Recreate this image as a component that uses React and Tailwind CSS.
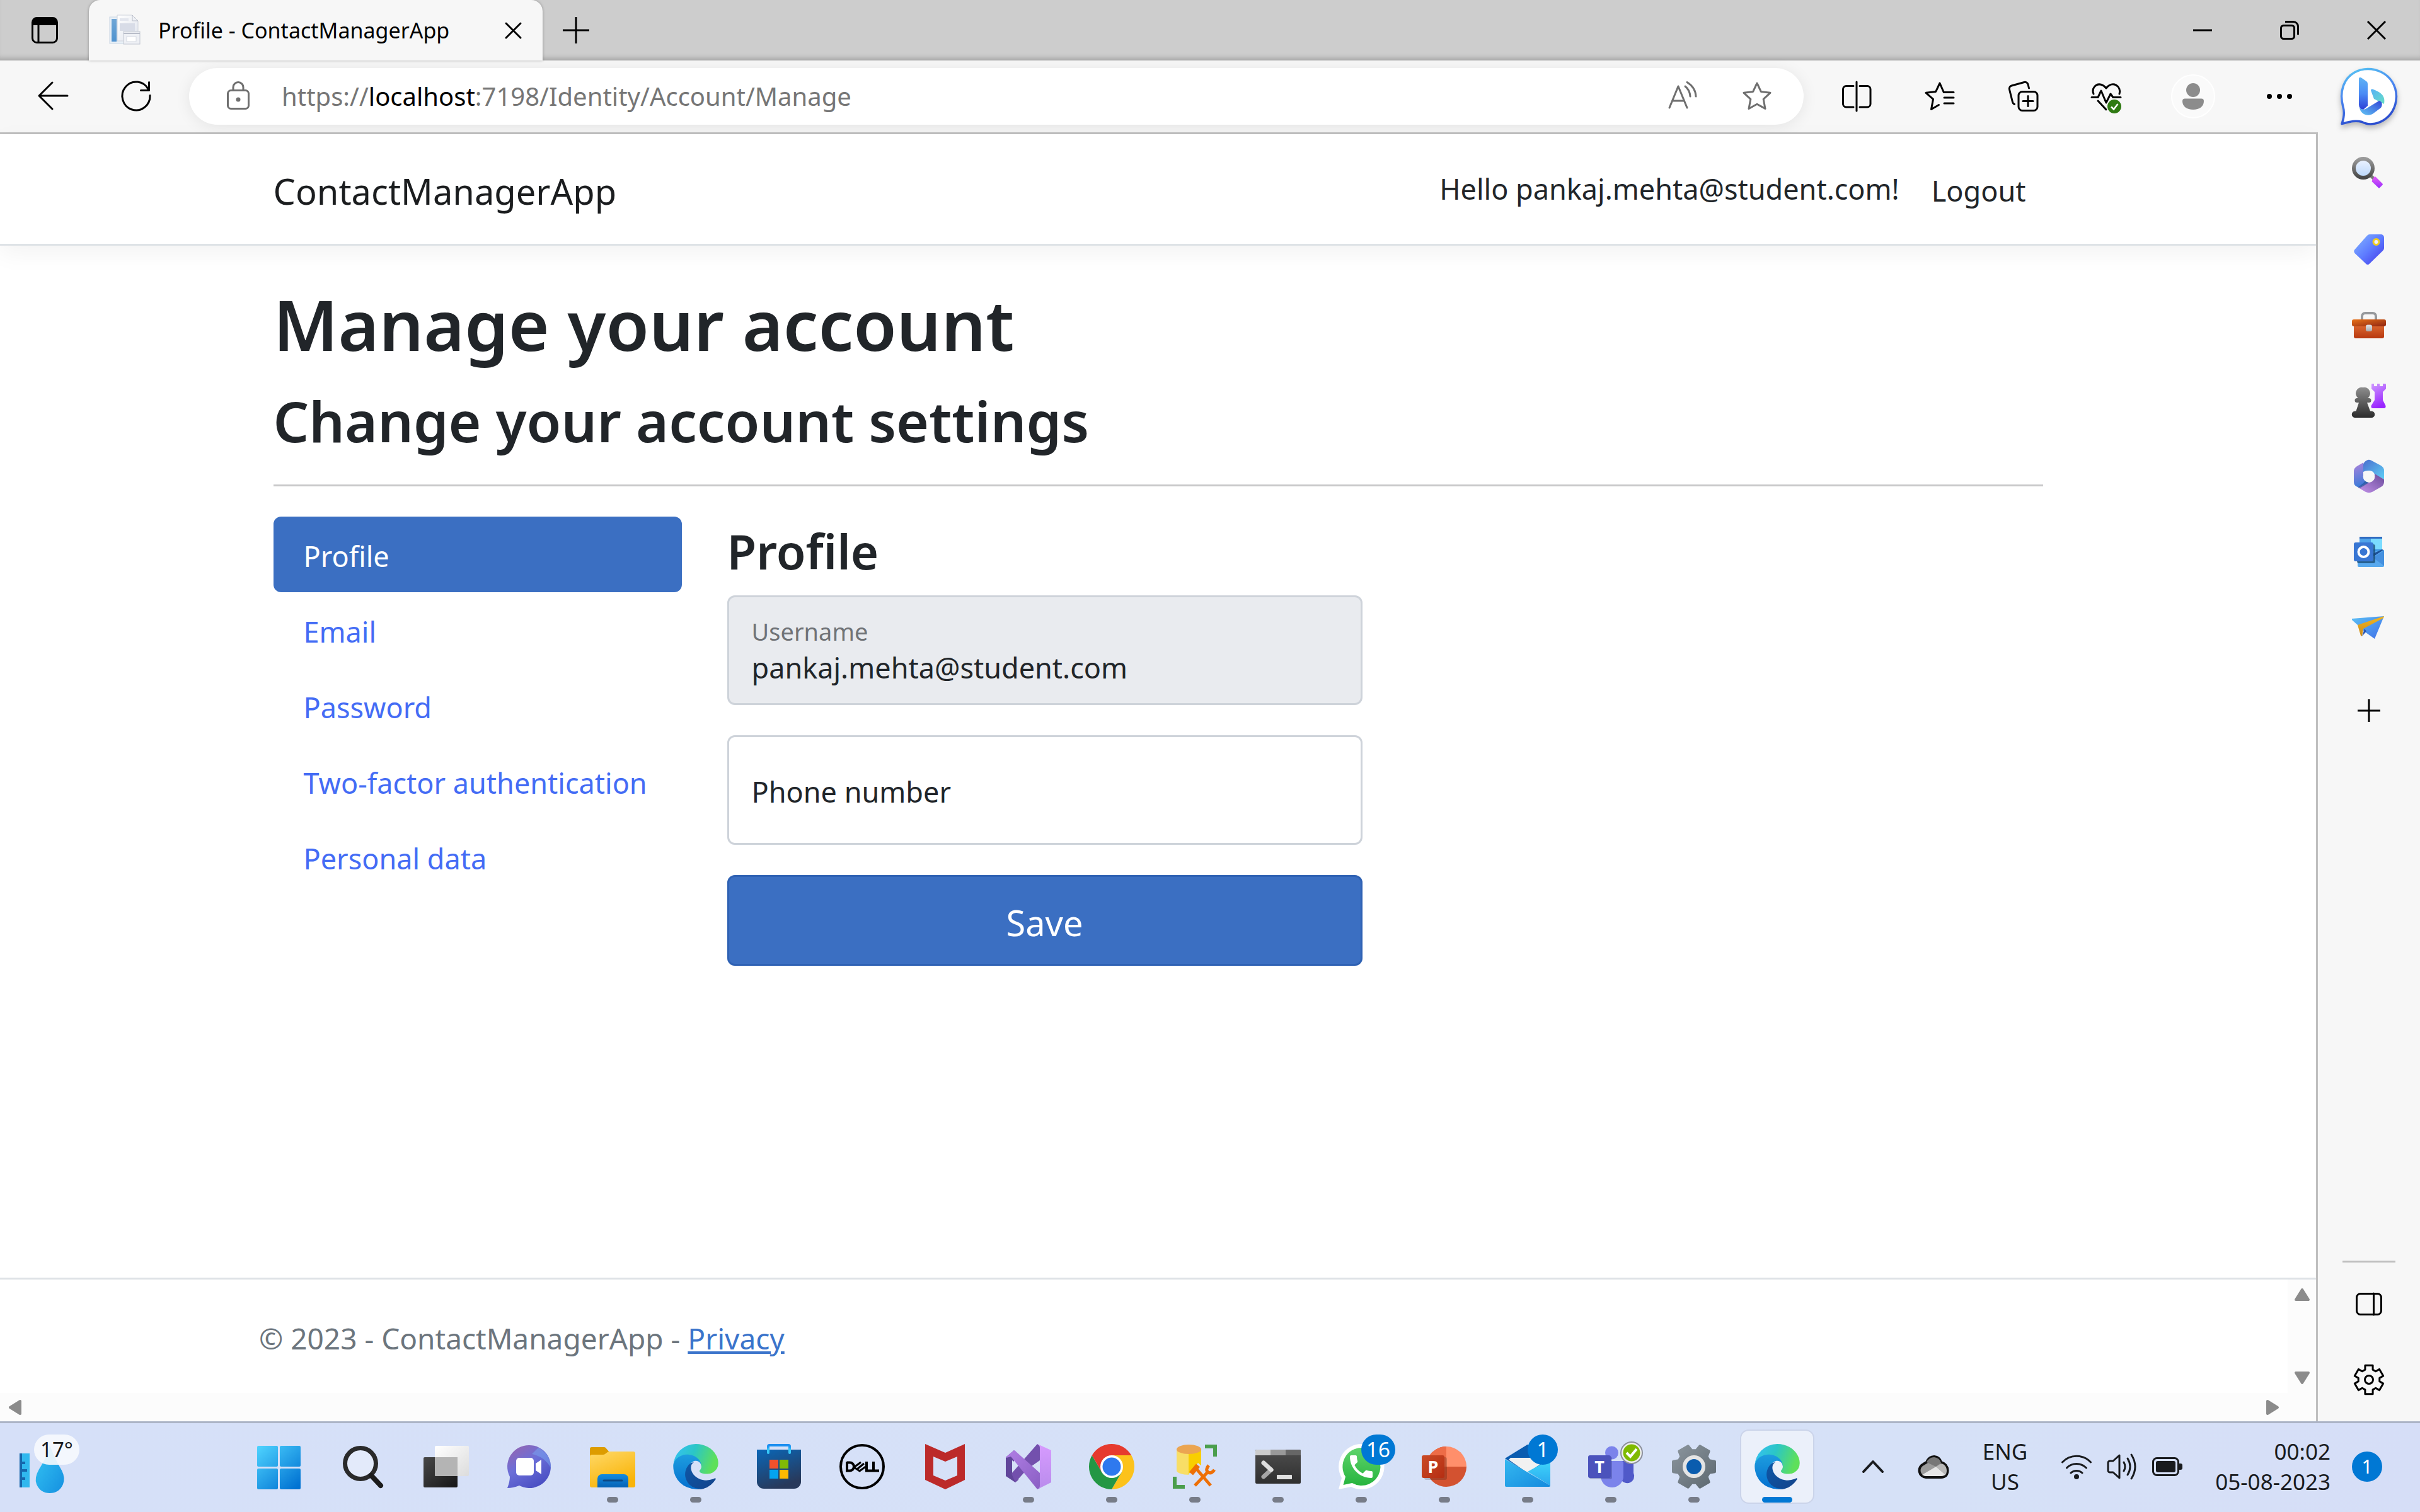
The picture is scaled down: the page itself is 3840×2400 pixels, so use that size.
import React from 'react';

/* ---------- helpers ---------- */

function Icon({ size = 48, className = '', children }) {
  return (
    <svg width={size} height={size} viewBox={`0 0 ${size} ${size}`} className={`block shrink-0 overflow-visible ${className}`} fill="none" aria-hidden="true">
      {children}
    </svg>
  );
}

function Grad({ id, from, to, x1 = 0, y1 = 0, x2 = 0, y2 = 1, mid }) {
  return (
    <linearGradient id={id} x1={x1} y1={y1} x2={x2} y2={y2}>
      <stop offset="0" stopColor={from} />
      {mid && <stop offset=".5" stopColor={mid} />}
      <stop offset="1" stopColor={to} />
    </linearGradient>
  );
}

function gearPath(cx, cy, outer, inner, start, topHalf, rootHalf) {
  const pts = [];
  for (let i = 0; i < 6; i++) {
    const a = start + i * 60;
    [[a - rootHalf, inner], [a - topHalf, outer], [a + topHalf, outer], [a + rootHalf, inner]].forEach(([deg, r]) => {
      const t = (deg * Math.PI) / 180;
      pts.push(`${(cx + r * Math.cos(t)).toFixed(2)} ${(cy + r * Math.sin(t)).toFixed(2)}`);
    });
  }
  return `M${pts.join('L')}Z`;
}

const STAR = 'M24 3L30.3 16.4L45 18.3L34.2 28.4L37 43.5L24 36.2L11 43.5L13.8 28.4L3 18.3L17.7 16.4Z';
const line = { stroke: 'currentColor', strokeWidth: 3, strokeLinecap: 'round', strokeLinejoin: 'round' };

/* ---------- browser icons ---------- */

const TabActions = () => (
  <Icon>
    <rect x="4.5" y="4.5" width="39" height="39" rx="7" {...line} />
    <path d="M4 16V11a7 7 0 0 1 7-7h26a7 7 0 0 1 7 7v5z" fill="currentColor" />
    <path d="M14 15v28" {...line} />
  </Icon>
);
const PageIcon = () => (
  <Icon size={50}>
    <defs>
      <Grad id="pg" from="#ffffff" to="#dfe3ec" x2={1} />
      <Grad id="pb" from="#6fa6d6" to="#4f92cf" />
    </defs>
    <rect x="1" y="4" width="30" height="42" fill="#e9f0f7" stroke="#c9d6e4" />
    <rect x="4" y="7" width="8" height="36" fill="url(#pb)" />
    <path d="M13 1h24l9 9v32H13z" fill="url(#pg)" stroke="#cfd3dc" />
    <path d="M37 1v9h9z" fill="#eef0f5" stroke="#b9bec9" />
    <rect x="17" y="14" width="24" height="12" fill="#d8dce7" />
    <rect x="17" y="6" width="14" height="4" fill="#e3e6ee" />
    <rect x="23" y="27" width="26" height="20" fill="#eef0f5" stroke="#c2c7d2" />
    <path d="M23 30h26" stroke="#b8bdc9" strokeWidth="2" />
    <rect x="28" y="35" width="15" height="8" fill="#fff" stroke="#d5d9e2" />
  </Icon>
);
const Close = () => <Icon size={27}><path d="M2 2L25 25M25 2L2 25" {...line} /></Icon>;
const WinClose = () => <Icon size={30}><path d="M1 1L29 29M29 1L1 29" {...line} strokeLinecap="butt" /></Icon>;
const Plus = () => <Icon size={42}><path d="M21 0V42M0 21H42" {...line} strokeLinecap="butt" /></Icon>;
const Minimize = () => <Icon size={30}><path d="M0 15H30" {...line} strokeLinecap="butt" /></Icon>;
const Restore = () => (
  <Icon size={30}>
    <rect x="1.5" y="7.5" width="21" height="21" rx="4" {...line} />
    <path d="M8 1.5H21a7.500 7.500 0 0 1 7.500 7.500V22" {...line} strokeLinecap="butt" />
  </Icon>
);
const Back = () => <Icon><path d="M47 23H2M23 2L2 23L23 44" {...line} /></Icon>;
const Refresh = () => (
  <Icon>
    <path d="M46 22.500A22 22.500 0 1 1 43.500 13" {...line} />
    <path d="M44.500 1.500V14.500H31.500" {...line} />
  </Icon>
);
const Lock = () => (
  <Icon>
    <rect x="7.5" y="14.5" width="33" height="29" rx="5" {...line} />
    <path d="M16 14V9.500a8 8 0 0 1 16 0V14" {...line} />
    <circle cx="24" cy="29" r="3.500" fill="currentColor" />
  </Icon>
);
const ReadAloud = () => (
  <Icon>
    <path d="M3 42L17 8L31 42M8 31H26" {...line} />
    <path d="M28 8C33 12 35.500 17 36 24M31 1.500C40 7 44.500 14 45 24" {...line} />
  </Icon>
);
const Star = () => <Icon><path d={STAR} {...line} /></Icon>;
const Split = () => (
  <Icon>
    <path d="M24 1V47" {...line} />
    <path d="M19 7.500H7.500a5 5 0 0 0-5 5V36a5 5 0 0 0 5 5H19M29 7.500H41a5 5 0 0 1 5 5V36a5 5 0 0 1-5 5H29" {...line} />
  </Icon>
);
const Favorites = () => (
  <Icon>
    <path d="M46 17.500H30.300L24 3L17.700 16.400L2 18.300L13.500 28.400L10.500 44.500L22.500 37.500" {...line} />
    <path d="M31 26H46M31 35H46" {...line} />
  </Icon>
);
const Collections = () => (
  <Icon>
    <rect x="17" y="16.500" width="30" height="30" rx="6" {...line} />
    <path d="M32 23.500V39.500M24 31.500H40" {...line} />
    <path d="M10.500 36.500A5 5 0 0 1 7.500 33L2.500 13A5 5 0 0 1 6 7L26 1.500A5 5 0 0 1 32 5L33.500 11" {...line} />
  </Icon>
);
const Heart = () => (
  <Icon>
    <path d="M4 20C-1 8 14-2 24 11C34-2 49 8 45 20M11 31L24 45" {...line} />
    <path d="M1 25.500H11L16 15L24 34L31 20L35 25.500H47" {...line} />
    <circle cx="37" cy="40" r="11" fill="#2f7a12" />
    <path d="M32 40.500L36 44.500L42.500 36" stroke="#fff" strokeWidth="2.500" />
  </Icon>
);
const Avatar = () => (
  <Icon size={70}>
    <circle cx="35" cy="35" r="34" fill="#fafafa" stroke="#fff" strokeWidth="2" />
    <circle cx="35" cy="25" r="11" fill="#8c8c8c" />
    <path d="M22 38.500H48a4 4 0 0 1 4 4C52 51 45 56 35 56S18 51 18 42.500a4 4 0 0 1 4-4z" fill="#8c8c8c" />
  </Icon>
);
const Dots = () => (
  <Icon>
    {[10, 26, 42].map((x) => <circle key={x} cx={x} cy="24" r="4" fill="currentColor" />)}
  </Icon>
);

/* ---------- sidebar icons ---------- */

const Bing = () => (
  <Icon size={90} className="drop-shadow-[0_5px_4px_rgba(0,0,0,0.25)]">
    <defs>
      <Grad id="bo" from="#58c8f3" mid="#4a86f0" to="#2c4fd0" x2={0.3} />
      <Grad id="b1" from="#5fb4f5" mid="#4b8cf5" to="#2c40d6" />
      <Grad id="b2" from="#63c7f5" to="#2f45d8" x1={0} y1={1} x2={1} y2={0} />
      <Grad id="b3" from="#57b0f7" to="#66dfc6" x2={1} />
    </defs>
    <path d="M2 88.500C5 80 7 72 4 62C-3 36 6 16 22 7C48-8 88 8 88.500 45C88 82 52 96 34 85.500C22 82 12 86 2 88.500Z" fill="#fff" stroke="url(#bo)" strokeWidth="3.500" strokeLinejoin="round" />
    <path d="M29 17C29 15 31 14 33 15.500L41 21Q43 22.500 43 25V60L36 66Q29 65 29 58Z" fill="url(#b1)" />
    <path d="M48 35.500C48 33.500 50 33 52 34C62 38 72 43 69 57L53 49Z" fill="url(#b3)" />
    <path d="M30 63C34 67 39 66 43 63L61 52C66 53 67 58 64 63L52 72C44 78 32 74 30 63Z" fill="url(#b2)" />
  </Icon>
);
const SideSearch = () => (
  <Icon size={54}>
    <defs>
      <Grad id="ss1" from="#9a9a9a" to="#484848" />
      <Grad id="ss2" from="#eef4ff" to="#b9d6fa" />
      <Grad id="ss3" from="#e45cf7" to="#9a2dfc" />
    </defs>
    <path d="M30 30L36 36" stroke="#777" strokeWidth="5" />
    <circle cx="18" cy="18" r="15" fill="url(#ss2)" stroke="url(#ss1)" strokeWidth="6" />
    <path d="M38 32L48.500 42.500Q49.500 43.500 48.500 44.500L44 49Q43 50 42 49L32 39.500Q31 38.500 32 37.500L35 32Q36.500 30.500 38 32Z" fill="url(#ss3)" />
  </Icon>
);
const Tag = () => (
  <Icon size={54}>
    <defs><Grad id="tg" from="#85b8ff" mid="#5f7dff" to="#4236e8" x2={1} /></defs>
    <path d="M28 3H46a5 5 0 0 1 5 5V25Q51 27 49 29L28 49.500Q25 52.500 22 49.500L4.500 33Q2 29.500 4.500 27L24 5Q26 3 28 3Z" fill="url(#tg)" />
    <circle cx="38.500" cy="15" r="4.500" fill="#eef" stroke="#f2cd1e" strokeWidth="3" />
  </Icon>
);
const Toolbox = () => (
  <Icon size={54}>
    <defs>
      <Grad id="tb1" from="#e06f35" to="#b8380f" />
      <Grad id="tb2" from="#e8731a" to="#8f2410" x2={1} />
      <Grad id="tb3" from="#e3e5e8" to="#a8abb0" />
    </defs>
    <path d="M16 18V13a5 5 0 0 1 5-5H33a5 5 0 0 1 5 5V18" stroke="#97999c" strokeWidth="4" />
    <rect x="3" y="24" width="48" height="24" rx="3" fill="url(#tb1)" />
    <rect x="0" y="18" width="54" height="11" rx="3" fill="url(#tb2)" />
    <rect x="22" y="26.500" width="10" height="10.500" rx="3" fill="url(#tb3)" />
  </Icon>
);
const Chess = () => (
  <Icon size={54}>
    <defs>
      <Grad id="ch1" from="#8d8d8d" to="#2c2c2c" />
      <Grad id="ch2" from="#cf9bff" to="#9a26ff" x2={0.3} />
    </defs>
    <path d="M31 1Q31 0 32 0H35V4H40V0H44V4H49V0H53Q54 0 54 2V8L49 13V26L53.500 35Q54 39 51 39H33Q30 39 30.500 35L36 26V13L31 8Z" fill="url(#ch2)" />
    <path d="M17.500 6A9.500 9.500 0 0 1 25 23H27a3.500 3.500 0 0 1 0 7H24L29 43.500H31a5 5 0 0 1 0 10.500H5a5 5 0 0 1 0-10.500H6.500L11 30H8a3.500 3.500 0 0 1 0-7H10A9.500 9.500 0 0 1 17.500 6Z" fill="url(#ch1)" />
  </Icon>
);
const M365 = () => (
  <Icon size={54}>
    <defs>
      <Grad id="m1" from="#b184dc" to="#3d7ad8" x2={0.2} />
      <Grad id="m2" from="#4a6fcf" to="#5fd0f6" x2={1} />
      <Grad id="m3" from="#c393ea" to="#6a4a9a" x1={0} y1={1} x2={1} y2={0} />
    </defs>
    <path d="M20 4L8 11Q3 14 3 19V36Q3 42 9 44L12 45L27 37Q18 35 18 27V5Z" fill="url(#m1)" />
    <path d="M18 20V8Q19 4 24 1.500Q27 0 31 2L46 10Q51 13 51 18V32L36 24Q34 18 27 18Q21 18 18 20Z" fill="url(#m2)" />
    <path d="M36 23L51 32V36Q51 41 46 44L32 52Q27 54 22 52L10 45L24 37Q34 37 36 29Z" fill="url(#m3)" />
    <path d="M27 37L14 45H9L18 38L21 34Z" fill="#24579c" opacity=".7" />
    <circle cx="27" cy="27.500" r="9.300" fill="#f7f7f7" />
  </Icon>
);
const Outlook = () => (
  <Icon size={54}>
    <rect x="12" y="3" width="36" height="30" rx="2" fill="#4fa3ea" />
    <rect x="30" y="6" width="18" height="17" fill="#7bdcff" />
    <rect x="12" y="3" width="36" height="3" fill="#2f6bc0" />
    <rect x="30" y="23" width="18" height="12" fill="#3b93e0" />
    <path d="M9 30L51 24V49a2 2 0 0 1-2 2H11a2 2 0 0 1-2-2Z" fill="#58a9ee" />
    <path d="M51 25V49L33 36Z" fill="#4590df" />
    <path d="M50 24L33 35V30L48 23Z" fill="#1c4f97" />
    <rect x="8" y="15" width="29" height="30" rx="3" fill="#174a70" opacity=".75" />
    <rect x="3" y="12" width="31" height="30" rx="3" fill="#3876d3" />
    <circle cx="18.500" cy="27" r="8" stroke="#fff" strokeWidth="4" />
  </Icon>
);
const Plane = () => (
  <Icon size={54}>
    <defs>
      <Grad id="pl1" from="#5cc0f5" to="#3f6fe8" x2={1} />
      <Grad id="pl2" from="#f3b61f" to="#c98a1c" />
    </defs>
    <path d="M0 13L51 9L36 45L15 30L9 23L0 15Z" fill="url(#pl1)" />
    <path d="M16 41L23 33L20 29Z" fill="#2755b5" />
    <path d="M51 9L50 12L18 29L16 41L14 40L9 23Z" fill="url(#pl2)" />
  </Icon>
);
const Panel = () => (
  <Icon size={42}><rect x="1.500" y="4.500" width="39" height="33" rx="6" {...line} /><path d="M28.500 4V38" {...line} /></Icon>
);
const SideGear = () => (
  <Icon size={54}>
    <path d={gearPath(27, 27, 23.5, 17, 30, 15, 21)} {...line} strokeLinejoin="round" />
    <circle cx="27" cy="27" r="6.500" {...line} />
  </Icon>
);

/* ---------- taskbar icons ---------- */

const Start = () => (
  <Icon size={72}>
    <defs>
      <linearGradient id="wn" gradientUnits="userSpaceOnUse" x1="0" y1="3" x2="60" y2="72">
        <stop stopColor="#4fd4ff" /><stop offset="1" stopColor="#0072d2" />
      </linearGradient>
    </defs>
    {[[0, 3], [36, 3], [0, 39], [36, 39]].map(([x, y]) => <rect key={`${x}-${y}`} x={x} y={y} width="33" height="33" rx="2" fill="url(#wn)" />)}
  </Icon>
);
const TaskSearch = () => (
  <Icon size={72}>
    <circle cx="32" cy="31" r="24.500" fill="#e3eafa" stroke="#2a2a2a" strokeWidth="7" />
    <path d="M49 50L64 66" stroke="#1c1c1c" strokeWidth="8" strokeLinecap="round" />
  </Icon>
);
const TaskView = () => (
  <Icon size={72}>
    <defs><Grad id="tv1" from="#484848" to="#161616" x2={1} /><Grad id="tv2" from="#ffffff" to="#dcdcdc" x2={1} /></defs>
    <rect x="0" y="21" width="54" height="48" rx="2" fill="url(#tv1)" />
    <rect x="18" y="3" width="54" height="48" rx="2" fill="url(#tv2)" />
    <path d="M18 21H54V51H20a2 2 0 0 1-2-2Z" fill="#b4b4b4" />
  </Icon>
);
const Chat = () => (
  <Icon size={72}>
    <defs><Grad id="ct" from="#9a64ac" mid="#6c6fd8" to="#4b50c4" x1={0} y1={0} x2={0.6} /></defs>
    <path d="M36 2A34 34 0 1 1 20 66Q10 70 1 70Q5 60 5 52A34 34 0 0 1 36 2Z" fill="url(#ct)" />
    <path d="M50 6A34 34 0 0 1 70 38Q60 20 40 16Z" fill="#7aa7f2" opacity=".5" />
    <rect x="15" y="22" width="28" height="28" rx="5" fill="#fff" />
    <path d="M46 31L55 25V48L46 42Z" fill="#fff" />
  </Icon>
);
const Folder = () => (
  <Icon size={72}>
    <defs><Grad id="fo" from="#ffd968" to="#f9b409" x2={0.5} /><Grad id="fb" from="#128be0" to="#0562b5" /></defs>
    <path d="M0 8a3 3 0 0 1 3-3H22q2 0 3 1L31 13L26 22H0Z" fill="#dd9c00" />
    <path d="M0 20a3 3 0 0 1 3-3H21q2 0 3-1L28 13q1-1 3-1H69a3 3 0 0 1 3 3V66a3 3 0 0 1-3 3H3a3 3 0 0 1-3-3Z" fill="url(#fo)" />
    <path d="M12 69V55a7 7 0 0 1 7-7H54a7 7 0 0 1 7 7V69Z" fill="url(#fb)" />
    <path d="M22 58H51" stroke="#0b4a87" strokeWidth="3" strokeLinecap="round" />
  </Icon>
);
function Edge() {
  return (
    <svg width="72" height="72" viewBox="0 0 256 258" className="block shrink-0" aria-hidden="true">
      <defs>
        <Grad id="e1" from="#0d58a8" to="#14438a" x2={1} />
        <Grad id="e2" from="#1fa0e0" to="#0470cf" />
        <Grad id="e3" from="#36c0f8" mid="#2bc6c6" to="#5ee05a" x2={1} y2={0.25} />
      </defs>
      <path d="M235.680 195.460a93.730 93.730 0 0 1-10.540 4.710 101.870 101.870 0 0 1-35.900 6.460c-47.320 0-88.540-32.550-88.540-74.320A31.480 31.480 0 0 1 117.130 105.050c-42.800 1.800-53.800 46.400-53.800 72.530 0 73.880 68.090 81.370 82.760 81.370 7.910 0 19.840-2.300 27-4.560l1.310-.44a128.340 128.340 0 0 0 66.600-52.800 4 4 0 0 0-5.320-5.690z" fill="url(#e1)" />
      <path d="M105.730 241.420a79.200 79.200 0 0 1-22.740-21.340 80.720 80.720 0 0 1 29.530-120c3.120-1.470 8.450-4.130 15.540-4a32.350 32.350 0 0 1 25.690 13 31.880 31.880 0 0 1 6.360 18.660c0-.21 24.460-79.600-80-79.600-43.900 0-80 41.660-80 78.210a130.150 130.150 0 0 0 12.110 56 128 128 0 0 0 156.380 67.110 75.550 75.550 0 0 1-62.780-8z" fill="url(#e2)" />
      <path d="M152.330 148.860c-.81 1.050-3.300 2.500-3.300 5.660 0 2.610 1.700 5.120 4.720 7.230 14.380 10 41.490 8.680 41.560 8.680a59.560 59.560 0 0 0 30.270-8.350 61.380 61.380 0 0 0 30.430-52.880c.26-22.410-8-37.310-11.340-43.910C223.470 23.840 177.720 0 128 0A128 128 0 0 0 0 126.200c.48-36.540 36.800-66.050 80-66.050 3.500 0 23.460.34 42 10.070 16.340 8.580 24.900 18.940 30.850 29.210 6.180 10.670 7.280 24.150 7.280 29.520s-2.740 13.330-7.800 19.910z" fill="url(#e3)" />
    </svg>
  );
}
const Store = () => (
  <Icon size={72}>
    <defs><Grad id="st" from="#0a67b8" to="#28395b" x2={0.4} /><Grad id="sh" from="#1b8df0" to="#35d0ff" /></defs>
    <path d="M19 14V4a2 2 0 0 1 2-2H51a2 2 0 0 1 2 2V14" stroke="url(#sh)" strokeWidth="4" />
    <path d="M1 9H71V60a11 11 0 0 1-11 11H12a11 11 0 0 1-11-11Z" fill="url(#st)" />
    <path d="M19 9V14M53 9V14" stroke="#35c8f8" strokeWidth="4" strokeLinecap="round" />
    <rect x="21" y="25" width="14" height="14" fill="#f4512c" /><rect x="37" y="25" width="14" height="14" fill="#80ba06" />
    <rect x="21" y="41" width="14" height="14" fill="#04a4ee" /><rect x="37" y="41" width="14" height="14" fill="#ffb902" />
  </Icon>
);
const Dell = () => (
  <Icon size={72}>
    <circle cx="36" cy="36" r="34" stroke="#000" strokeWidth="4" />
    <g stroke="#000" strokeWidth="4">
      <path d="M12 29.500H16.500A6.500 6.500 0 0 1 16.500 42.500H12V28" />
      <path d="M34 29L23 37L32 43L43 35M28 40L39 31" strokeWidth="3" />
      <path d="M43 28V42.500H52M54 28V42.500H63" />
    </g>
  </Icon>
);
const McAfee = () => (
  <Icon size={72}><path fillRule="evenodd" d="M4 0L36 14L67 0V57L36 72L4 57ZM17 20V50L36 58L55 50V20L36 28Z" fill="#bc2a2a" /></Icon>
);
const VisualStudio = () => (
  <Icon size={72}>
    <defs><Grad id="v1" from="#b07ee4" to="#8a5fc4" x2={1} /><Grad id="v2" from="#d79bff" to="#b98cec" /></defs>
    <path d="M0 21L13 10V28L10 26V47L20 40V57L15 61L0 51Z" fill="#60459a" />
    <path d="M15 61L9 47L50 0L54 3V26L34 40Z" fill="#7350ad" />
    <path d="M0 21L13 10Q15 10 16 12L54 46V70L50 72L8 20L1 22Z" fill="url(#v1)" />
    <path d="M50 0L72 10V61L50 72Q54 70 54 66V6Q54 2 50 0Z" fill="url(#v2)" />
  </Icon>
);
const Chrome = () => (
  <Icon size={72}>
    <path d="M67.200 18A36 36 0 0 1 36 72L51.600 45L36 36V18Z" fill="#fcc21b" />
    <path d="M4.800 18A36 36 0 0 0 36 72L51.600 45L36 36L20.400 45Z" fill="#249745" />
    <path d="M4.800 18A36 36 0 0 1 67.200 18H36V36L20.400 45Z" fill="#e63a2e" />
    <circle cx="36" cy="36" r="18" fill="#fff" /><circle cx="36" cy="36" r="14.500" fill="#2f79ee" />
  </Icon>
);
const Ssms = () => (
  <Icon size={72}>
    <path d="M7 9H27V49C16 49 7 46 7 42Z" fill="#f8de66" />
    <path d="M26 9H46V42C46 46 38 49 26 49Z" fill="#f9cf00" />
    <ellipse cx="26.500" cy="8.500" rx="19.500" ry="7.500" fill="#eba551" />
    <path d="M26 48L41 30L48 36L60 60L32 62Z" fill="#d7e0f6" />
    <path d="M52 1H71V20H65V7H52Z" fill="#4a9e4c" /><path d="M1 52H7V65H20V71H1Z" fill="#4a9e4c" />
    <g stroke="#ee6f05" strokeWidth="5">
      <path d="M38 39L61 66M36 66L58 43" />
      <path d="M30 47L41 34" strokeWidth="8" />
      <path d="M58 34Q52 41 57 45Q62 48 67 41" />
    </g>
  </Icon>
);
const Terminal = () => (
  <Icon size={72}>
    <defs><Grad id="tm" from="#4d4d4d" to="#2f2f2f" /></defs>
    <rect x="0" y="9" width="72" height="54" rx="2" fill="url(#tm)" />
    <path d="M0 18V11a2 2 0 0 1 2-2H24V18Z" fill="#cccccc" /><path d="M24 9H48V18H24Z" fill="#999" /><path d="M48 9H70a2 2 0 0 1 2 2V18H48Z" fill="#666" />
    <path d="M25 41L13 52" stroke="#a5a5a5" strokeWidth="7" strokeLinecap="round" />
    <path d="M13 30L25 41" stroke="#dedede" strokeWidth="7" strokeLinecap="round" />
    <rect x="34" y="49" width="24" height="7" rx="1" fill="#e0e0e0" />
  </Icon>
);
const WhatsApp = () => (
  <Icon size={72}>
    <defs><Grad id="wa" from="#5fd46c" to="#27b43e" /></defs>
    <path d="M36 0A36 36 0 1 1 20 68L0 72L5 54A36 36 0 0 1 36 0Z" fill="#fff" />
    <path d="M36 6A30 30 0 1 1 21.500 62L7.500 65L11 52A30 30 0 0 1 36 6Z" fill="url(#wa)" />
    <path transform="translate(12 12) scale(2)" fill="#fff" d="M6.620 10.790c1.440 2.830 3.760 5.140 6.590 6.590l2.200-2.200c.27-.27.67-.36 1.020-.24 1.120.37 2.330.57 3.570.57.55 0 1 .45 1 1V20c0 .55-.45 1-1 1-9.390 0-17-7.610-17-17 0-.55.45-1 1-1h3.500c.55 0 1 .45 1 1 0 1.250.2 2.450.57 3.570.11.35.03.74-.25 1.020l-2.200 2.200z" />
  </Icon>
);
const PowerPoint = () => (
  <Icon size={72}>
    <defs><Grad id="pp" from="#ca4a26" to="#b52e12" x2={1} /></defs>
    <path d="M39 36V4A32 32 0 1 0 71 36Z" fill="#d35230" />
    <path d="M39 36V4A32 32 0 0 0 7 36Z" fill="#ed6c47" />
    <path d="M39 4A32 32 0 0 1 71 36H39Z" fill="#ff8f6b" />
    <rect x="4" y="21" width="36" height="36" rx="3" fill="#000" opacity=".18" />
    <rect x="0" y="18" width="36" height="36" rx="3" fill="url(#pp)" />
    <text x="18" y="46" textAnchor="middle" fontSize="27" fontWeight="700" fill="#fff" fontFamily="Noto Sans, sans-serif">P</text>
  </Icon>
);
const Mail = () => (
  <Icon size={72}>
    <defs><Grad id="ma" from="#35b8f0" to="#148ade" x2={1} /><Grad id="mb" from="#41d8fb" to="#2aa8ee" /></defs>
    <path d="M0 23L34 2q2-2 4 0L72 23L36 46Z" fill="#0a5cb0" />
    <path d="M6 25L9 22H63L66 25L36 46Z" fill="#f1f1f1" />
    <path d="M72 24V66L36 44Z" fill="url(#mb)" />
    <path d="M0 24L72 66Q72 68 70 68H2a2 2 0 0 1-2-2Z" fill="url(#ma)" />
  </Icon>
);
const Teams = () => (
  <Icon size={72}>
    <path d="M50 27H69a3 3 0 0 1 3 3V46A11 11 0 0 1 52 56Z" fill="#5059c9" />
    <circle cx="62" cy="17" r="7" fill="#5059c9" />
    <circle cx="37.500" cy="14" r="10.500" fill="#7b83eb" />
    <path d="M20 27H53a3 3 0 0 1 3 3V50A18 18 0 0 1 20 52Z" fill="#7b83eb" />
    <rect x="2" y="20" width="36" height="36" rx="3" fill="#222a70" opacity=".3" />
    <rect x="0" y="18" width="36" height="36" rx="3" fill="#4b53bc" />
    <text x="18" y="46" textAnchor="middle" fontSize="27" fontWeight="700" fill="#fff" fontFamily="Noto Sans, sans-serif">T</text>
  </Icon>
);
const Gear = () => (
  <Icon size={72}>
    <defs><Grad id="ge" from="#8b959d" to="#5d6870" x2={1} /></defs>
    <path d={gearPath(36, 36, 34, 26, 0, 14, 22)} fill="url(#ge)" stroke="url(#ge)" strokeWidth="4" strokeLinejoin="round" />
    <circle cx="36" cy="36" r="15" fill="#0a5cae" stroke="#e4e4e4" strokeWidth="6" />
  </Icon>
);
const Weather = () => (
  <Icon size={96}>
    <defs><Grad id="we" from="#35c6f4" to="#1590e0" x2={1} /></defs>
    <rect x="1" y="27" width="16" height="54" fill="#30b8ee" /><rect x="1" y="27" width="4" height="54" fill="#1667ac" />
    <path d="M5 42H10M5 54H13M5 67H10" stroke="#1667ac" strokeWidth="4" />
    <path d="M49 14Q56 34 68 54Q74 66 70 76Q64 90 49 90T28 76Q24 66 32 52Q44 34 49 14Z" fill="url(#we)" />
  </Icon>
);
const Cloud = () => (
  <Icon size={48}>
    <path d="M12 41A11 11 0 0 1 8 20Q11 18 13 17Q17 8 25 8Q34 9 36 17Q46 20 46.500 30Q46 41 36 41Z" fill="#9b9b9b" stroke="#111" strokeWidth="4" />
    <path d="M13 17Q17 9 25 9Q34 10 36 18L28 24Z" fill="#777" />
    <path d="M6 37L28 24L43 37Q39 39 36 39H12Q9 39 6 37Z" fill="#e6e6e6" />
    <path d="M28 24L37 19Q45 22 45 30Q45 35 43 37Z" fill="#b8b8b8" />
  </Icon>
);
const Wifi = () => (
  <Icon>
    <path d="M1.500 17A31 31 0 0 1 46.500 17M8.500 26A22 22 0 0 1 39.500 26M15 34A13 13 0 0 1 33 34" {...line} />
    <circle cx="24" cy="40" r="4" fill="currentColor" />
  </Icon>
);
const Volume = () => (
  <Icon>
    <path d="M2 18a3 3 0 0 1 3-3H10L20 6V42L10 33H5a3 3 0 0 1-3-3Z" {...line} />
    <path d="M27 17Q31 24 27 31M33 11Q41 24 33 37M39 5Q51 24 39 43" {...line} />
  </Icon>
);
const Battery = () => (
  <Icon>
    <rect x="1.500" y="10.500" width="40" height="27" rx="6" {...line} />
    <rect x="6" y="15" width="31" height="18" rx="3" fill="currentColor" />
    <path d="M43 19H45a3 3 0 0 1 3 3V26a3 3 0 0 1-3 3H43Z" fill="currentColor" />
  </Icon>
);
const Chevron = () => <Icon size={36}><path d="M3 26L18 10L33 26" {...line} strokeWidth="4" /></Icon>;

/* ---------- browser frame ---------- */

function TabStrip() {
  return (
    <div className="flex h-[96px] items-stretch bg-[#cdcdcd] shadow-[inset_0_-9px_9px_-6px_rgba(0,0,0,0.22)]">
      <button aria-label="Tab actions" className="grid w-[141px] place-items-center text-black"><TabActions /></button>
      <div className="relative flex w-[720px] items-center rounded-t-[18px] bg-[#f7f7f7] pl-[32px] shadow-[0_0_4px_rgba(0,0,0,0.3)]">
        <PageIcon />
        <span className="ml-[28px] flex-1 whitespace-nowrap text-[34px] leading-[48px] text-black">Profile - ContactManagerApp</span>
        <button aria-label="Close tab" className="mr-[33px]"><Close /></button>
      </div>
      <button aria-label="New tab" className="grid w-[106px] place-items-center"><Plus /></button>
      <div className="ml-auto flex text-black">
        <button aria-label="Minimize" className="grid w-[138px] place-items-center"><Minimize /></button>
        <button aria-label="Restore" className="grid w-[138px] place-items-center"><Restore /></button>
        <button aria-label="Close" className="grid w-[138px] place-items-center"><WinClose /></button>
      </div>
    </div>
  );
}

function Toolbar() {
  return (
    <div className="flex h-[114px] items-center bg-[#f7f7f7] text-black">
      <button aria-label="Back" className="ml-[18px] grid w-[132px] place-items-center"><Back /></button>
      <button aria-label="Refresh" className="grid w-[132px] place-items-center"><Refresh /></button>
      <div className="mx-[18px] flex h-[90px] flex-1 items-center rounded-full bg-white pl-[54px] pr-[50px] text-[#6f6f6f] shadow-[0_3px_24px_rgba(0,0,0,0.08)]">
        <button aria-label="Site information"><Lock /></button>
        <div role="textbox" aria-label="Address" className="ml-[45px] flex-1 whitespace-nowrap text-[40px] leading-[60px] text-[#767676]">
          https://<span className="text-black">localhost</span>:7198/Identity/Account/Manage
        </div>
        <button aria-label="Read aloud" className="mr-[70px]"><ReadAloud /></button>
        <button aria-label="Add to favorites"><Star /></button>
      </div>
      <button aria-label="Split screen" className="grid w-[132px] place-items-center"><Split /></button>
      <button aria-label="Favorites" className="grid w-[132px] place-items-center"><Favorites /></button>
      <button aria-label="Collections" className="grid w-[132px] place-items-center"><Collections /></button>
      <button aria-label="Browser essentials" className="grid w-[132px] place-items-center"><Heart /></button>
      <button aria-label="Account" className="grid w-[144px] place-items-center"><Avatar /></button>
      <button aria-label="Settings and more" className="grid w-[126px] place-items-center"><Dots /></button>
    </div>
  );
}

const sideItems = [['Search', SideSearch], ['Shopping', Tag], ['Tools', Toolbox], ['Games', Chess], ['Microsoft 365', M365], ['Outlook', Outlook], ['Drop', Plane]];

function Sidebar() {
  return (
    <aside className="flex w-[162px] shrink-0 flex-col items-center bg-[#f7f7f7] text-black">
      <button aria-label="Bing chat" className="h-[120px] pt-[12px]"><span className="block h-[108px]"><Bing /></span></button>
      {sideItems.map(([name, I]) => (
        <button key={name} aria-label={name} className="grid h-[120px] w-full place-items-center"><I /></button>
      ))}
      <button aria-label="Customize" className="grid h-[144px] w-full place-items-center"><Icon size={36}><path d="M18 0V36M0 18H36" {...line} strokeLinecap="butt" /></Icon></button>
      <div className="mt-auto mb-[6px] h-[3px] w-[84px] bg-[#bfbfbf]" />
      <button aria-label="Hide sidebar" className="grid h-[120px] w-full place-items-center"><Panel /></button>
      <button aria-label="Sidebar settings" className="mb-[6px] grid h-[120px] w-full place-items-center"><SideGear /></button>
    </aside>
  );
}

/* ---------- page ---------- */

const navItems = ['Profile', 'Email', 'Password', 'Two-factor authentication', 'Personal data'];

function Arrow({ d }) {
  return <Icon size={24}><path d={d} fill="#8b8b8b" stroke="#8b8b8b" strokeWidth="4" strokeLinejoin="round" /></Icon>;
}

function Page() {
  return (
    <div className="flex flex-1 flex-col border-t-[3px] border-r-[3px] border-[#bfbfbf] bg-white text-[45px] leading-[72px] text-[#212529]">
      <header className="border-b-[3px] border-[#dee2e6] pt-[27px] pb-[21px] shadow-[0_12px_36px_rgba(0,0,0,0.05)]">
        <nav className="mx-auto flex h-[126px] max-w-[2880px] items-center justify-between px-[36px]">
          <a href="#home" className="text-[56px] leading-[90px] text-[#1b1d1f]">ContactManagerApp</a>
          <div className="flex h-full items-start">
            <a href="#manage" className="px-[24px] pt-[24px]">Hello pankaj.mehta@student.com!</a>
            <button className="px-[27px] py-[27px]">Logout</button>
          </div>
        </nav>
      </header>

      <main className="mx-auto w-full max-w-[2880px] flex-1 px-[36px] pt-[52px]">
        <h1 className="mb-[24px] text-[111px] leading-[144px] font-semibold">Manage your account</h1>
        <h2 className="text-[89px] leading-[115px] font-semibold">Change your account settings</h2>
        <hr className="mt-[44px] mb-[48px] border-t-[3px] border-[#c8c8c9]" />
        <div className="grid grid-cols-4 gap-[72px]">
          <ul>
            {navItems.map((n, i) => (
              <li key={n}>
                <a href={`#${n}`} className={`block rounded-[12px] px-[48px] pt-[27px] pb-[21px] whitespace-nowrap ${i === 0 ? 'bg-[#3b6fc2] text-white' : 'text-[#446cf5]'}`}>{n}</a>
              </li>
            ))}
          </ul>
          <section className="col-span-3 grid grid-cols-2 gap-[72px]">
            <form className="flex flex-col" onSubmit={(e) => e.preventDefault()}>
              <h3 className="mb-[20px] pt-[4px] text-[76px] leading-[101px] font-semibold">Profile</h3>
              <div className="relative mb-[48px]">
                <input id="username" disabled defaultValue="pankaj.mehta@student.com" className="block h-[174px] w-full rounded-[12px] border-[3px] border-[#ced3da] bg-[#e9ebef] px-[36px] pt-[54px] pb-0 text-[#212529]" />
                <label htmlFor="username" className="absolute top-[30px] left-[39px] text-[38px] leading-[54px] text-[#707377]">Username</label>
              </div>
              <div className="relative mb-[48px]">
                <input id="phone" className="block h-[174px] w-full rounded-[12px] border-[3px] border-[#ced3da] bg-white px-[36px]" />
                <label htmlFor="phone" className="absolute inset-y-0 left-[39px] flex items-center pt-[6px]">Phone number</label>
              </div>
              <button className="h-[144px] rounded-[12px] border-[3px] border-[#2f62b4] bg-[#3b6fc2] pt-[6px] text-[56px] leading-[90px] text-white">Save</button>
            </form>
          </section>
        </div>
      </main>

      <div className="flex border-t-[3px] border-[#dee2e6]">
        <footer className="flex-1">
          <div className="mx-auto max-w-[2880px] px-[36px] pt-[6px] text-[46px] leading-[174px] text-[#6c757d]">
            © 2023 - ContactManagerApp - <a href="#privacy" className="text-[#3b74cb] underline">Privacy</a>
          </div>
        </footer>
        <div className="flex w-[45px] flex-col items-center justify-between bg-[#fcfcfc] py-[12px]">
          <Arrow d="M12 4L22 20H2Z" />
          <Arrow d="M2 4H22L12 20Z" />
        </div>
      </div>
      <div className="flex h-[45px] items-center justify-between bg-[#fcfcfc] pr-[57px] pl-[12px]">
        <Arrow d="M20 2V22L4 12Z" />
        <Arrow d="M4 2L20 12L4 22Z" />
      </div>
    </div>
  );
}

/* ---------- taskbar ---------- */

const apps = [
  { name: 'Start', I: Start },
  { name: 'Search', I: TaskSearch },
  { name: 'Task view', I: TaskView },
  { name: 'Chat', I: Chat },
  { name: 'File Explorer', I: Folder, open: true },
  { name: 'Edge', I: Edge, open: true },
  { name: 'Store', I: Store },
  { name: 'Dell', I: Dell },
  { name: 'McAfee', I: McAfee },
  { name: 'Visual Studio', I: VisualStudio, open: true },
  { name: 'Chrome', I: Chrome, open: true },
  { name: 'SQL Server Management Studio', I: Ssms, open: true },
  { name: 'Terminal', I: Terminal, open: true },
  { name: 'WhatsApp', I: WhatsApp, open: true, badge: '16' },
  { name: 'PowerPoint', I: PowerPoint, open: true },
  { name: 'Mail', I: Mail, open: true, badge: '1' },
  { name: 'Teams', I: Teams, open: true, status: true },
  { name: 'Settings', I: Gear, open: true },
  { name: 'Edge profile window', I: Edge, active: true },
];

function TaskItem({ name, I, open, active, badge, status }) {
  return (
    <button aria-label={name} className="grid w-[132px] place-items-center">
      <span className={`relative grid h-[114px] w-[114px] place-items-center rounded-[12px] ${active ? 'bg-[#ebf0fa] shadow-[0_0_0_2px_#cbd4ea]' : ''}`}>
        <I />
        {badge && <span className="absolute top-[6px] left-[57px] grid h-[48px] min-w-[48px] place-items-center rounded-full bg-[#0078d4] px-[8px] text-[33px] leading-[48px] text-white">{badge}</span>}
        {status && (
          <span className="absolute top-[18px] left-[73px]">
            <Icon size={34}><circle cx="17" cy="17" r="15" fill="#7fba00" stroke="#eee" strokeWidth="3" /><circle cx="17" cy="17" r="17" stroke="#8c909c" strokeWidth="2" /><path d="M9 17L15 23L25 11" stroke="#fff" strokeWidth="4" /></Icon>
          </span>
        )}
        {open && <span className="absolute bottom-0 left-1/2 h-[9px] w-[18px] -translate-x-1/2 rounded-full bg-[#777c88]" />}
        {active && <span className="absolute bottom-0 left-1/2 h-[9px] w-[48px] -translate-x-1/2 rounded-full bg-[#0078d4]" />}
      </span>
    </button>
  );
}

function Taskbar() {
  return (
    <div className="flex h-[144px] items-stretch border-t-[3px] border-[#acb4c6] bg-[linear-gradient(90deg,#d6e0f8,#d6e1f7_80%,#d6def7)] pb-[3px] text-[35px] leading-[48px] text-[#191b1e]">
      <button className="relative ml-[30px] flex items-center" aria-label="Weather">
        <Weather />
        <span className="absolute top-[18px] left-[24px] grid h-[48px] w-[72px] place-items-center rounded-full bg-[#f7f9fd]/90 text-[33px] leading-[48px]">17°</span>
      </button>
      <div className="ml-[252px] flex">
        {apps.map((a) => <TaskItem key={a.name} {...a} />)}
      </div>
      <div className="ml-auto flex items-center pr-[60px]">
        <button aria-label="Show hidden icons"><Chevron /></button>
        <button aria-label="OneDrive" className="ml-[54px]"><Cloud /></button>
        <button className="ml-[54px] text-center">ENG<br />US</button>
        <button aria-label="Network and sound" className="ml-[54px] flex gap-[24px]"><Wifi /><Volume /><Battery /></button>
        <button className="ml-[52px] text-right">00:02<br />05-08-2023</button>
        <button aria-label="Notifications" className="ml-[34px] grid size-[48px] place-items-center rounded-full bg-[#0078d4] text-[30px] leading-[48px] text-white">1</button>
      </div>
    </div>
  );
}

export default function App() {
  return (
    <div className="flex min-h-screen w-full flex-col bg-white font-['Noto_Sans','Open_Sans',sans-serif]">
      <TabStrip />
      <div className="flex flex-1">
        <div className="flex min-w-0 flex-1 flex-col">
          <Toolbar />
          <Page />
        </div>
        <Sidebar />
      </div>
      <Taskbar />
    </div>
  );
}
